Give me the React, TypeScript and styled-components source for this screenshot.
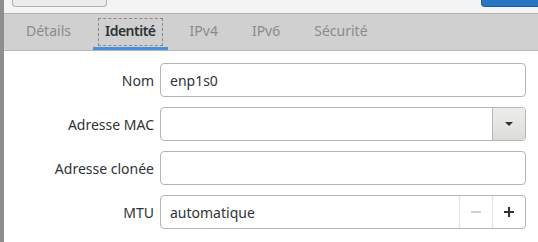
import styled, { createGlobalStyle } from "styled-components";

const GlobalStyle = createGlobalStyle`
  html, body {
    margin: 0;
    padding: 0;
    background: #ffffff;
  }
  body {
    font-family: "Noto Sans", "Open Sans", sans-serif;
    font-size: 14px;
    color: #2e3436;
  }
`;

const Window = styled.div`
  display: flex;
  width: 538px;
  height: 242px;
  overflow: hidden;
`;

const LeftEdge = styled.div`
  width: 4px;
  background: #8e8e8e;
  flex: none;
`;

const Main = styled.div`
  flex: 1;
  display: flex;
  flex-direction: column;
  min-width: 0;
`;

const HeaderBar = styled.div`
  height: 13px;
  background: #f4f4f4;
  border-bottom: 1px solid #b4b4b4;
  display: flex;
  justify-content: space-between;
  align-items: flex-start;
  padding-left: 8px;
`;

const HeaderButton = styled.div<{ $suggested?: boolean }>`
  height: 6px;
  width: ${({ $suggested }) => ($suggested ? "56px" : "93px")};
  border: 1px solid ${({ $suggested }) => ($suggested ? "#1b5aa6" : "#b0b0b0")};
  border-top: none;
  background: ${({ $suggested }) => ($suggested ? "#2a76c6" : "#ececec")};
  border-right: ${({ $suggested }) => ($suggested ? "none" : "1px solid #b0b0b0")};
  border-radius: ${({ $suggested }) => ($suggested ? "0 0 0 4px" : "0 0 4px 4px")};
`;

const TabBar = styled.div`
  height: 36px;
  background: #d0d0d0;
  border-bottom: 1px solid #b4b4b4;
  display: flex;
  align-items: stretch;
  gap: 10px;
  padding-left: 10px;
`;

const Tab = styled.div<{ $active?: boolean }>`
  position: relative;
  display: flex;
  align-items: center;
  padding: 0 12px 3px;
  font-size: 14px;
  font-weight: ${({ $active }) => ($active ? 600 : 400)};
  letter-spacing: ${({ $active }) => ($active ? "-0.5px" : "0")};
  color: ${({ $active }) => ($active ? "#2e3436" : "#8b8b8b")};
  box-shadow: ${({ $active }) => ($active ? "inset 0 -3px 0 #4a90d9" : "none")};
`;

const FocusRing = styled.span`
  position: absolute;
  left: 5px;
  right: 5px;
  top: 4px;
  bottom: 4px;
  border: 1px dashed #8a8a8a;
`;

const Form = styled.div`
  display: grid;
  grid-template-columns: 1fr 366px;
  grid-auto-rows: 34px;
  column-gap: 6px;
  row-gap: 10px;
  padding: 12px 12px 0 0;
`;

const Label = styled.div`
  display: flex;
  align-items: center;
  justify-content: flex-end;
  font-size: 14px;
  color: #2e3436;
`;

const Field = styled.div`
  display: flex;
  align-items: stretch;
  border: 1px solid #b9b6b1;
  border-radius: 4px;
  background: #ffffff;
  overflow: hidden;
`;

const FieldText = styled.div`
  flex: 1;
  display: flex;
  align-items: center;
  padding: 0 9px;
  font-size: 14px;
  color: #2e3436;
`;

const ComboButton = styled.div`
  width: 32px;
  flex: none;
  display: flex;
  align-items: center;
  justify-content: center;
  border-left: 1px solid #b9b6b1;
  background: linear-gradient(#ededec, #dddcda);
`;

const SpinButton = styled.div<{ $disabled?: boolean }>`
  width: 32px;
  flex: none;
  display: flex;
  align-items: center;
  justify-content: center;
  border-left: 1px solid #e2e2e2;
  color: ${({ $disabled }) => ($disabled ? "#d0d0d0" : "#2e3436")};
`;

const Arrow = () => (
  <svg width="10" height="6" viewBox="0 0 10 6">
    <path d="M1 1h8L5 5z" fill="#2e3436" />
  </svg>
);

const Minus = () => (
  <svg width="12" height="12" viewBox="0 0 12 12">
    <path d="M1 6h10" stroke="currentColor" strokeWidth="2" />
  </svg>
);

const Plus = () => (
  <svg width="12" height="12" viewBox="0 0 12 12">
    <path d="M1 6h10M6 1v10" stroke="currentColor" strokeWidth="2" />
  </svg>
);

const tabs = ["Détails", "Identité", "IPv4", "IPv6", "Sécurité"];

export default function App() {
  return (
    <>
      <GlobalStyle />
      <Window>
        <LeftEdge />
        <Main>
          <HeaderBar>
            <HeaderButton />
            <HeaderButton $suggested />
          </HeaderBar>
          <TabBar>
            {tabs.map((t) => (
              <Tab key={t} $active={t === "Identité"}>
                {t === "Identité" && <FocusRing />}
                {t}
              </Tab>
            ))}
          </TabBar>
          <Form>
            <Label>Nom</Label>
            <Field>
              <FieldText>enp1s0</FieldText>
            </Field>

            <Label>Adresse MAC</Label>
            <Field>
              <FieldText />
              <ComboButton>
                <Arrow />
              </ComboButton>
            </Field>

            <Label>Adresse clonée</Label>
            <Field>
              <FieldText />
            </Field>

            <Label>MTU</Label>
            <Field>
              <FieldText>automatique</FieldText>
              <SpinButton $disabled>
                <Minus />
              </SpinButton>
              <SpinButton>
                <Plus />
              </SpinButton>
            </Field>
          </Form>
        </Main>
      </Window>
    </>
  );
}
